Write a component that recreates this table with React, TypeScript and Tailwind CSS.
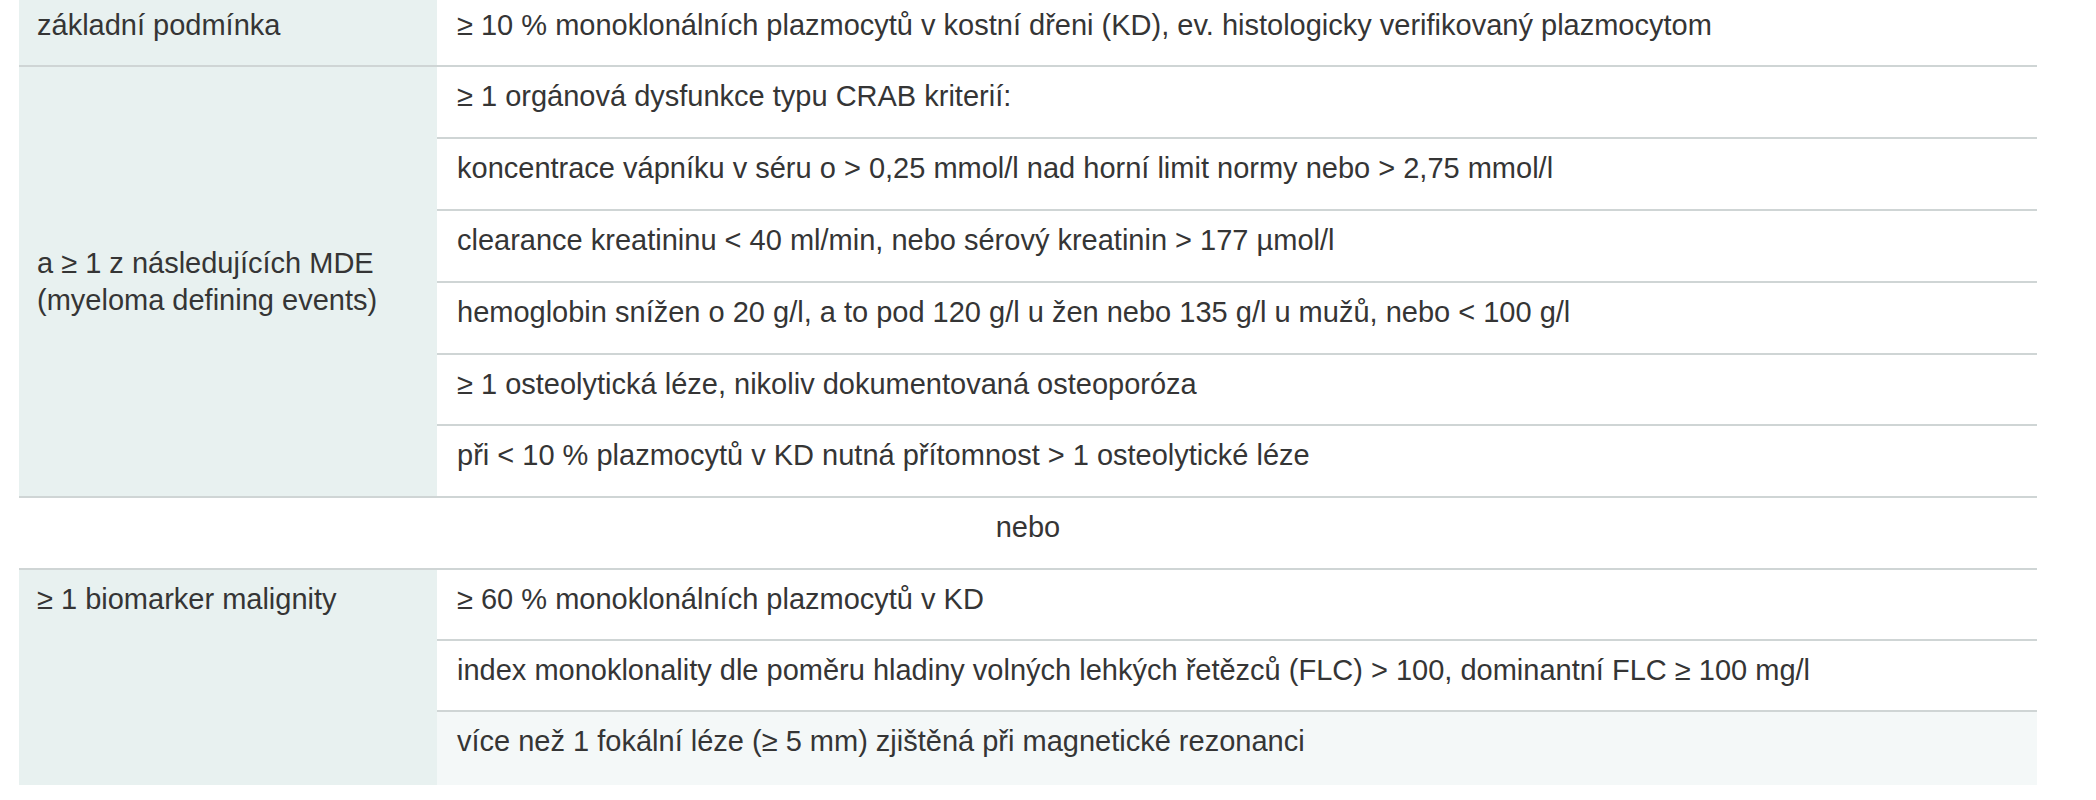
import React from "react";

const Row = ({ children, last = false, tint = false, h = "h-[72px]" }: { children: React.ReactNode; last?: boolean; tint?: boolean; h?: string }) => (
  <div className={`${h} pl-[20px] pt-[11px] ${last ? "" : "border-b-2 border-[#cfd5d5]"} ${tint ? "bg-[#f4f8f8]" : "bg-white"}`}>
    {children}
  </div>
);

export default function App() {
  return (
    <div className="w-[2096px] h-[800px] overflow-hidden bg-white text-[29px] leading-[36px] text-[#353535] font-['Liberation_Sans',Arial,sans-serif]">
      <div className="ml-[19px] w-[2018px]">
        {/* group 1 */}
        <div className="flex h-[67px] border-b-2 border-[#cfd5d5]">
          <div className="w-[418px] bg-[#e8f1f0] pl-[18px] pt-[7px]">základní podmínka</div>
          <div className="flex-1 pl-[20px] pt-[7px] bg-white">
            ≥ 10 % monoklonálních plazmocytů v kostní dřeni (KD), ev. histologicky verifikovaný plazmocytom
          </div>
        </div>

        {/* group 2 */}
        <div className="flex border-b-2 border-[#cfd5d5]">
          <div className="w-[418px] bg-[#e8f1f0] pl-[18px] flex items-center leading-[37px]">
            <div>
              a ≥ 1 z následujících MDE
              <br />
              (myeloma defining events)
            </div>
          </div>
          <div className="flex-1 flex flex-col">
            <Row>≥ 1 orgánová dysfunkce typu CRAB kriterií:</Row>
            <Row>koncentrace vápníku v séru o &gt; 0,25 mmol/l nad horní limit normy nebo &gt; 2,75 mmol/l</Row>
            <Row>clearance kreatininu &lt; 40 ml/min, nebo sérový kreatinin &gt; 177 µmol/l</Row>
            <Row>hemoglobin snížen o 20 g/l, a to pod 120 g/l u žen nebo 135 g/l u mužů, nebo &lt; 100 g/l</Row>
            <Row h="h-[71px]">≥ 1 osteolytická léze, nikoliv dokumentovaná osteoporóza</Row>
            <Row last h="h-[70px]">při &lt; 10 % plazmocytů v KD nutná přítomnost &gt; 1 osteolytické léze</Row>
          </div>
        </div>

        {/* nebo */}
        <div className="h-[72px] pt-[11px] text-center border-b-2 border-[#cfd5d5] bg-white">nebo</div>

        {/* group 3 */}
        <div className="flex">
          <div className="w-[418px] bg-[#e8f1f0] pl-[18px] pt-[11px]">≥ 1 biomarker malignity</div>
          <div className="flex-1 flex flex-col">
            <Row h="h-[71px]">≥ 60 % monoklonálních plazmocytů v KD</Row>
            <Row h="h-[71px]">index monoklonality dle poměru hladiny volných lehkých řetězců (FLC) &gt; 100, dominantní FLC ≥ 100 mg/l</Row>
            <Row last tint h="h-[73px]">více než 1 fokální léze (≥ 5 mm) zjištěná při magnetické rezonanci</Row>
          </div>
        </div>
      </div>
    </div>
  );
}
